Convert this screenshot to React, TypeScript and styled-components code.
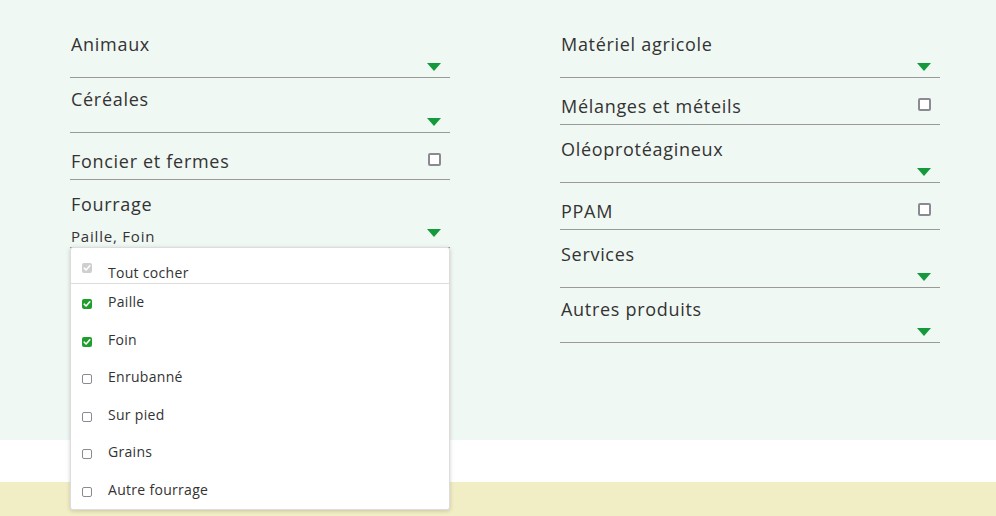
import React from "react";
import styled, {createGlobalStyle} from "styled-components";

const GlobalStyle = createGlobalStyle`
  body {
    margin: 0;
    font-family: "Open Sans", "Liberation Sans", sans-serif;
    color: #333;
    background: #fff;
  }
`;

type Filter =
    | {kind: "select"; label: string; value?: string; options?: {label: string; checked: boolean}[]}
    | {kind: "check"; label: string};

const left: Filter[] = [
    {kind: "select", label: "Animaux"},
    {kind: "select", label: "Céréales"},
    {kind: "check", label: "Foncier et fermes"},
    {
        kind: "select",
        label: "Fourrage",
        value: "Paille, Foin",
        options: [
            {label: "Paille", checked: true},
            {label: "Foin", checked: true},
            {label: "Enrubanné", checked: false},
            {label: "Sur pied", checked: false},
            {label: "Grains", checked: false},
            {label: "Autre fourrage", checked: false},
        ],
    },
];

const right: Filter[] = [
    {kind: "select", label: "Matériel agricole"},
    {kind: "check", label: "Mélanges et méteils"},
    {kind: "select", label: "Oléoprotéagineux"},
    {kind: "check", label: "PPAM"},
    {kind: "select", label: "Services"},
    {kind: "select", label: "Autres produits"},
];

const Tick = ({color = "#fff"}: {color?: string}) => (
    <svg width="8" height="8" viewBox="0 0 8 8">
        <path d="M1.2 4.2 L3.1 6 L6.8 1.8" fill="none" stroke={color} strokeWidth="1.6" strokeLinecap="round"
              strokeLinejoin="round"/>
    </svg>
);

const renderFilter = (f: Filter) => {
    if (f.kind === "check") {
        return (
            <CheckRow key={f.label}>
                <Label>{f.label}</Label>
                <BigBox/>
            </CheckRow>
        );
    }
    const tall = !!f.value;
    return (
        <SelectRow key={f.label}>
            <Label>{f.label}</Label>
            <Control $tall={tall}>
                <Value>{f.value}</Value>
                <Caret $tall={tall}/>
            </Control>
            {f.options && (
                <Menu>
                    <MenuHead>
                        <SmallBox $state="disabled"><Tick/></SmallBox>
                        <MenuText>Tout cocher</MenuText>
                    </MenuHead>
                    {f.options.map((o) => (
                        <MenuItem key={o.label}>
                            <SmallBox $state={o.checked ? "on" : "off"}>{o.checked && <Tick/>}</SmallBox>
                            <MenuText>{o.label}</MenuText>
                        </MenuItem>
                    ))}
                </Menu>
            )}
        </SelectRow>
    );
};

export default function App() {
    return (
        <>
            <GlobalStyle/>
            <Filters>
                <Column>{left.map(renderFilter)}</Column>
                <Column>{right.map(renderFilter)}</Column>
            </Filters>
            <Spacer/>
            <Footer/>
        </>
    );
}

const Filters = styled.section`
  height: 440px;
  box-sizing: border-box;
  background: #f0f8f3;
  padding: 23px 56px 0 70px;
  display: grid;
  grid-template-columns: 380px 380px;
  column-gap: 110px;
  align-items: start;
`;

const Column = styled.div`
  display: flex;
  flex-direction: column;
`;

const Label = styled.div`
  font-size: 18px;
  line-height: 22px;
  letter-spacing: 0.7px;
  color: #333;
  padding-left: 1px;
`;

const CheckRow = styled.div`
  display: flex;
  align-items: flex-start;
  justify-content: space-between;
  padding: 17px 9px 7px 0;
  border-bottom: 1px solid #9a9a9a;
`;

const SelectRow = styled.div`
  position: relative;
  padding-top: 10px;
  border-bottom: 1px solid #9a9a9a;

  ${CheckRow} + & {
    padding-top: 13px;
  }
`;

const Control = styled.div<{ $tall?: boolean }>`
  height: ${(p) => (p.$tall ? "32px" : "22px")};
  display: flex;
  align-items: flex-end;
  justify-content: space-between;
  padding: ${(p) => (p.$tall ? "0 9px 2px 1px" : "0 9px 0 1px")};
  box-sizing: border-box;
`;

const Value = styled.span`
  font-size: 15px;
  line-height: 18px;
  letter-spacing: 0.8px;
  color: #333;
`;

const Caret = styled.span<{ $tall?: boolean }>`
  width: 0;
  height: 0;
  border-left: 7px solid transparent;
  border-right: 7px solid transparent;
  border-top: 8px solid #149a3c;
  margin-bottom: ${(p) => (p.$tall ? "8px" : "6px")};
`;

const BigBox = styled.span`
  width: 13px;
  height: 13px;
  box-sizing: border-box;
  border: 2px solid #8a8a92;
  border-radius: 2px;
  background: #fff;
  margin-top: 3px;
`;

const Menu = styled.div`
  position: absolute;
  top: 100%;
  left: 0;
  right: 0;
  z-index: 5;
  background: #fff;
  border: 1px solid #ddd;
  border-radius: 3px;
  box-shadow: 0 1px 4px rgba(0, 0, 0, 0.18);
`;

const MenuHead = styled.div`
  display: flex;
  align-items: flex-start;
  gap: 16px;
  height: 36px;
  box-sizing: border-box;
  padding: 16px 11px 0;
  border-bottom: 1px solid #ddd;

  & > span:first-child {
    margin-top: -1px;
  }
`;

const MenuItem = styled.div`
  display: flex;
  align-items: flex-start;
  gap: 16px;
  height: 37.5px;
  box-sizing: border-box;
  padding: 9px 11px 0;

  & > span:first-child {
    margin-top: 6px;
  }
`;

const SmallBox = styled.span<{ $state: "on" | "off" | "disabled" }>`
  flex: none;
  width: 10px;
  height: 10px;
  box-sizing: border-box;
  border-radius: 2px;
  display: grid;
  place-items: center;
  background: ${(p) => (p.$state === "on" ? "#1f9e2c" : p.$state === "disabled" ? "#cfcfcf" : "#fff")};
  border: ${(p) => (p.$state === "off" ? "1.5px solid #8a8a92" : "none")};
`;

const MenuText = styled.span`
  font-size: 14px;
  line-height: 18px;
  letter-spacing: 0.3px;
  color: #333;
`;

const Spacer = styled.div`
  height: 42px;
  background: #fff;
`;

const Footer = styled.div`
  height: 34px;
  background: #f1eec5;
`;
